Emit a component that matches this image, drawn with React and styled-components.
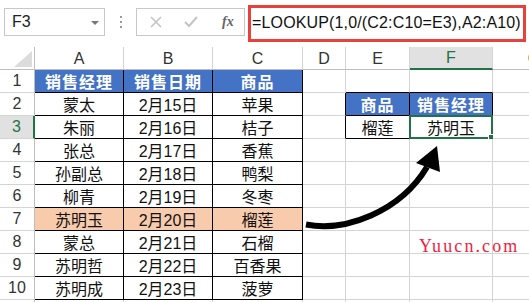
import React from "react";
import styled, { createGlobalStyle } from "styled-components";

const Global = createGlobalStyle`
  html, body { margin: 0; padding: 0; background: #fff; }
  body { font-family: "Liberation Sans", "Noto Sans CJK SC", sans-serif; overflow: hidden; }
`;

const Page = styled.div`
  position: relative;
  width: 529px;
  height: 302px;
  overflow: hidden;
  background: #fff;
`;

const FormulaBar = styled.div`
  display: flex;
  align-items: center;
  height: 47px;
  padding-left: 4px;
  box-sizing: border-box;
  padding-bottom: 3px;
`;

const NameBox = styled.div`
  position: relative;
  width: 101px;
  height: 28px;
  box-sizing: border-box;
  border: 1px solid #c8c8c8;
  display: flex;
  align-items: center;
  padding-left: 7px;
  font-size: 16px;
  color: #222;
`;

const DropArrow = styled.span`
  position: absolute;
  right: 5px;
  top: 12px;
  width: 0;
  height: 0;
  border-left: 4px solid transparent;
  border-right: 4px solid transparent;
  border-top: 4px solid #777;
`;

const Dots = styled.div`
  width: 31px;
  display: flex;
  flex-direction: column;
  align-items: center;
  gap: 3px;
  & > span {
    width: 2px;
    height: 2px;
    background: #9a9a9a;
  }
`;

const FxBox = styled.div`
  width: 109px;
  height: 28px;
  box-sizing: border-box;
  border: 1px solid #c8c8c8;
  display: flex;
  align-items: center;
  padding-left: 13px;
  gap: 22px;
`;

const FxText = styled.span`
  font-family: "Liberation Serif", serif;
  font-style: italic;
  font-weight: bold;
  font-size: 14px;
  color: #666;
  margin-left: 2px;
`;

const FormulaBox = styled.div`
  margin-left: 3px;
  width: 278px;
  height: 37px;
  flex-shrink: 0;
  box-sizing: border-box;
  border: 3px solid #e8413c;
  display: flex;
  align-items: center;
  padding-left: 1px;
  font-size: 16px;
  letter-spacing: 0.15px;
  color: #111;
  white-space: nowrap;
  margin-top: 2px;
`;

const Sheet = styled.div`
  display: grid;
  width: 576px;
  grid-template-columns: 35px 89px 89px 90px 43px 64px 83px 83px;
  grid-auto-rows: 23px;
`;

const Cell = styled.div`
  position: relative;
  box-sizing: border-box;
  border-right: 1px solid ${(p) => p.$br || "#d4d4d4"};
  border-bottom: 1px solid ${(p) => p.$bb || "#d4d4d4"};
  background: ${(p) => p.$bg || "#fff"};
  color: ${(p) => p.$color || "#111"};
  font-weight: ${(p) => (p.$bold ? "bold" : "normal")};
  font-size: 16px;
  display: flex;
  align-items: center;
  justify-content: center;
  white-space: nowrap;
  letter-spacing: ${(p) => (p.$bold ? "1px" : "0")};
`;

const ColHead = styled.div`
  box-sizing: border-box;
  border-right: 1px solid #d4d4d4;
  border-bottom: ${(p) => (p.$sel ? "2px solid #217346" : "1px solid #bdbdbd")};
  background: ${(p) => (p.$sel ? "#e1e1e1" : "#fff")};
  color: ${(p) => (p.$sel ? "#217346" : "#333")};
  font-size: 16px;
  display: flex;
  align-items: center;
  justify-content: center;
  padding-top: 1px;
`;

const RowHead = styled.div`
  box-sizing: border-box;
  border-right: ${(p) => (p.$sel ? "2px solid #217346" : "1px solid #bdbdbd")};
  border-bottom: 1px solid #d4d4d4;
  background: ${(p) => (p.$sel ? "#e1e1e1" : "#fff")};
  color: ${(p) => (p.$sel ? "#217346" : "#333")};
  font-size: 16px;
  display: flex;
  align-items: center;
  justify-content: center;
`;

const Corner = styled.div`
  box-sizing: border-box;
  border-right: 1px solid #bdbdbd;
  border-bottom: 1px solid #bdbdbd;
  display: flex;
  align-items: flex-end;
  justify-content: flex-end;
  padding: 0 2px 2px 0;
`;

const Selection = styled.div`
  position: absolute;
  left: -1px;
  top: -1px;
  right: -1px;
  bottom: -1px;
  border: 2px solid #217346;
  pointer-events: none;
`;

const FillHandle = styled.span`
  position: absolute;
  right: -4px;
  bottom: -4px;
  width: 5px;
  height: 5px;
  background: #217346;
  border: 1px solid #fff;
`;

const Overlay = styled.svg`
  position: absolute;
  left: 0;
  top: 0;
  pointer-events: none;
`;

const Watermark = styled.div`
  position: absolute;
  left: 419px;
  top: 236px;
  font-family: "Liberation Serif", serif;
  font-size: 18px;
  letter-spacing: 2.1px;
  color: #f21b3f;
`;

const BLUE = "#4472c4";
const PEACH = "#f8cbad";
const BLACK = "#000";

const colA = ["销售经理", "蒙太", "朱丽", "张总", "孙副总", "柳青", "苏明玉", "蒙总", "苏明哲", "苏明成"];
const colB = ["销售日期", "2月15日", "2月16日", "2月17日", "2月18日", "2月19日", "2月20日", "2月21日", "2月22日", "2月23日"];
const colC = ["商品", "苹果", "桔子", "香蕉", "鸭梨", "冬枣", "榴莲", "石榴", "百香果", "菠萝"];

const cols = ["A", "B", "C", "D", "E", "F", "G"];

export default function App() {
  const rows = [];
  for (let r = 1; r <= 11; r++) {
    const sel = r === 3;
    rows.push(<RowHead key={`rh${r}`} $sel={sel}>{r <= 10 ? r : ""}</RowHead>);
    const inTable = r <= 10;
    const head = r === 1;
    const peach = r === 7;
    const bg = head ? BLUE : peach ? PEACH : "#fff";
    [colA, colB, colC].forEach((col, i) => {
      rows.push(
        <Cell
          key={`c${r}${i}`}
          $bg={inTable ? bg : "#fff"}
          $color={head ? "#fff" : "#111"}
          $bold={head}
          $br={inTable ? BLACK : undefined}
          $bb={inTable ? BLACK : undefined}
        >
          {inTable ? col[r - 1] : ""}
        </Cell>
      );
    });
    rows.push(<Cell key={`d${r}`} $br={r === 2 || r === 3 ? BLACK : undefined} />);
    const smallTable = r === 2 || r === 3;
    rows.push(
      <Cell
        key={`e${r}`}
        $bg={r === 2 ? BLUE : "#fff"}
        $color={r === 2 ? "#fff" : "#111"}
        $bold={r === 2}
        $br={smallTable ? BLACK : undefined}
        $bb={r <= 3 ? BLACK : undefined}
      >
        {r === 2 ? "商品" : r === 3 ? "榴莲" : ""}
      </Cell>
    );
    rows.push(
      <Cell
        key={`f${r}`}
        $bg={r === 2 ? BLUE : "#fff"}
        $color={r === 2 ? "#fff" : "#111"}
        $bold={r === 2}
        $br={smallTable ? BLACK : undefined}
        $bb={r <= 3 ? BLACK : undefined}
      >
        {r === 2 ? "销售经理" : r === 3 ? "苏明玉" : ""}
        {r === 3 && (
          <Selection>
            <FillHandle />
          </Selection>
        )}
      </Cell>
    );
    rows.push(<Cell key={`g${r}`} />);
  }

  return (
    <Page>
      <Global />
      <FormulaBar>
        <NameBox>
          F3
          <DropArrow />
        </NameBox>
        <Dots>
          <span />
          <span />
          <span />
        </Dots>
        <FxBox>
          <svg width="12" height="12" viewBox="0 0 12 12">
            <path d="M1 1 L11 11 M11 1 L1 11" stroke="#c4c4c4" strokeWidth="1.6" fill="none" />
          </svg>
          <svg width="14" height="12" viewBox="0 0 14 12">
            <path d="M1 6 L5 10 L13 1" stroke="#c4c4c4" strokeWidth="2" fill="none" />
          </svg>
          <FxText>fx</FxText>
        </FxBox>
        <FormulaBox>=LOOKUP(1,0/(C2:C10=E3),A2:A10)</FormulaBox>
      </FormulaBar>
      <Sheet>
        <Corner>
          <svg width="18" height="16" viewBox="0 0 18 16">
            <polygon points="18,0 18,16 0,16" fill="#dcdcdc" />
          </svg>
        </Corner>
        {cols.map((c) => (
          <ColHead key={c} $sel={c === "F"}>{c}</ColHead>
        ))}
        {rows}
      </Sheet>
      <Overlay width="529" height="302" viewBox="0 0 529 302">
        <path d="M306 224.5 C345 232 400 212 427 167" stroke="#000" strokeWidth="6" fill="none" />
        <polygon points="416,163 437,146 440,172" fill="#000" />
      </Overlay>
      <Watermark>Yuucn.com</Watermark>
    </Page>
  );
}
